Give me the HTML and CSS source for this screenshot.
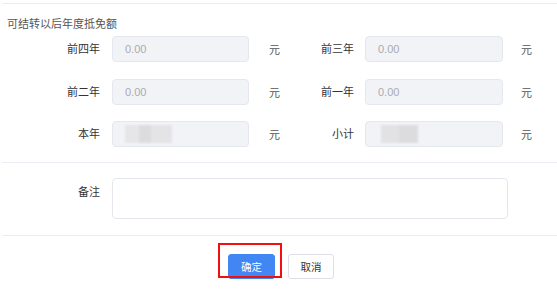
FILE: index.html
```html
<!DOCTYPE html>
<html lang="zh-CN">
<head>
  <meta charset="UTF-8">
  <title>可结转以后年度抵免额</title>
  <link rel="stylesheet" href="styles.css">
</head>
<body>
<div class="panel">
  <div class="rule"></div>
  <div class="section-title">可结转以后年度抵免额</div>

  <!-- amounts -->
  <div class="amount-grid">
    <label class="field-label">前四年</label>
    <div class="input disabled">0.00</div>
    <span class="unit">元</span>
    <label class="field-label right">前三年</label>
    <div class="input disabled">0.00</div>
    <span class="unit right">元</span>

    <label class="field-label">前二年</label>
    <div class="input disabled">0.00</div>
    <span class="unit">元</span>
    <label class="field-label right">前一年</label>
    <div class="input disabled">0.00</div>
    <span class="unit right">元</span>

    <label class="field-label">本年</label>
    <div class="input disabled"><span class="masked masked-wide"></span></div>
    <span class="unit">元</span>
    <label class="field-label right">小计</label>
    <div class="input disabled"><span class="masked masked-narrow"></span></div>
    <span class="unit right">元</span>
  </div>

  <div class="rule rule-mid"></div>

  <!-- remark -->
  <div class="remark-row">
    <label class="field-label">备注</label>
    <div class="textarea"></div>
  </div>

  <div class="rule rule-foot"></div>

  <div class="actions">
    <span class="highlight-wrap">
      <button class="btn btn-primary">确定</button>
      <span class="highlight"></span>
    </span>
    <button class="btn">取消</button>
  </div>
</div>
</body>
</html>
```

FILE: styles.css
```css
*, *::before, *::after { box-sizing: border-box; }
body { margin: 0; background: #fff; font-family: "Liberation Sans", "Noto Sans CJK SC", sans-serif; font-size: 11px; color: #333; }
.panel { width: 557px; height: 291px; overflow: hidden; padding-top: 3px; }
.rule { height: 1px; background: #ebedf2; margin-left: 2px; }
.section-title { margin: 12px 0 0 7px; line-height: 16px; color: #555; }

/* amounts grid */
.amount-grid {
  display: grid;
  grid-template-columns: 112px 137px 35px 81px 138px auto;
  row-gap: 16.5px;
  align-items: center;
  margin-top: 4px;
}
.field-label { text-align: right; padding-right: 12px; color: #333; line-height: 16px; }
.field-label.right { padding-right: 11px; }
.unit { padding-left: 20px; color: #555; }
.unit.right { padding-left: 18px; }
.input {
  height: 26px;
  border: 1px solid #e4e7ed;
  border-radius: 4px;
  padding-left: 12px;
  display: flex;
  align-items: center;
  font-size: 11px;
}
.input.disabled { background: #f2f3f7; color: #a8abb2; }
.masked { display: block; height: 18px; filter: blur(1px); }
.masked-wide { width: 47px; background: linear-gradient(90deg, #e6e6e8 0 30%, #dcdcdf 30% 55%, #e4e4e7 55% 100%); }
.masked-narrow { width: 37px; margin-left: 3px; background: linear-gradient(90deg, #e2e2e5 0 50%, #dcdcdf 50% 100%); }

.rule-mid { margin-top: 15px; }

/* remark */
.remark-row { display: flex; align-items: flex-start; margin-top: 15px; }
.remark-row .field-label { width: 112px; padding-top: 6px; }
.textarea { width: 396px; height: 41px; border: 1px solid #e4e7ed; border-radius: 4px; background: #fff; }

.rule-foot { margin-top: 16px; }

/* footer actions */
.actions { display: flex; justify-content: center; gap: 13px; padding-left: 5px; margin-top: 18px; }
.btn {
  width: 46px;
  height: 25px;
  border: 1px solid #dcdfe6;
  border-radius: 3px;
  background: #fff;
  color: #333;
  font-family: inherit;
  font-size: 10.5px;
  padding: 0;
}
.btn-primary { width: 47px; background: #4286f4; border-color: #4286f4; color: #fff; }
.highlight-wrap { position: relative; display: inline-flex; }
.highlight { position: absolute; left: -10px; top: -11px; width: 64px; height: 35px; border: 2px solid #f01010; }
```
